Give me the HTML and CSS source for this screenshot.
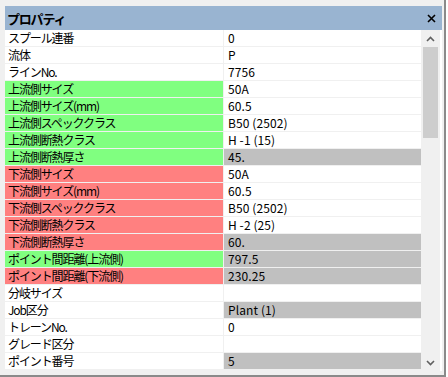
FILE: index.html
```html
<!DOCTYPE html>
<html lang="ja">
<head>
    <meta charset="UTF-8">
    <title>プロパティ</title>
    <link rel="stylesheet" href="styles.css">
</head>
<body>
    <div class="window">
        <div class="titlebar">
            <span class="title">プロパティ</span>
            <svg class="close" width="9" height="9" viewBox="0 0 9 9"><path d="M1 1 L8 8 M8 1 L1 8" stroke="#000" stroke-width="1.6"/></svg>
        </div>
        <div class="panel">
            <div class="grid">
                <div class="label">スプール連番</div><div class="value">0</div>
                <div class="label">流体</div><div class="value">P</div>
                <div class="label">ラインNo.</div><div class="value">7756</div>
                <div class="label up">上流側サイズ</div><div class="value">50A</div>
                <div class="label up">上流側サイズ(mm)</div><div class="value">60.5</div>
                <div class="label up">上流側スペッククラス</div><div class="value">B50 (2502)</div>
                <div class="label up">上流側断熱クラス</div><div class="value">H -1 (15)</div>
                <div class="label up">上流側断熱厚さ</div><div class="value ro">45.</div>
                <div class="label down">下流側サイズ</div><div class="value">50A</div>
                <div class="label down">下流側サイズ(mm)</div><div class="value">60.5</div>
                <div class="label down">下流側スペッククラス</div><div class="value">B50 (2502)</div>
                <div class="label down">下流側断熱クラス</div><div class="value">H -2 (25)</div>
                <div class="label down">下流側断熱厚さ</div><div class="value ro">60.</div>
                <div class="label up">ポイント間距離(上流側)</div><div class="value ro">797.5</div>
                <div class="label down">ポイント間距離(下流側)</div><div class="value ro">230.25</div>
                <div class="label">分岐サイズ</div><div class="value"></div>
                <div class="label">Job区分</div><div class="value ro">Plant (1)</div>
                <div class="label">トレーンNo.</div><div class="value">0</div>
                <div class="label">グレード区分</div><div class="value"></div>
                <div class="label">ポイント番号</div><div class="value ro">5</div>
            </div>
            <div class="scrollbar">
                <div class="arrow">
                    <svg width="9" height="6" viewBox="0 0 9 6"><path d="M1 5 L4.5 1.5 L8 5" fill="none" stroke="#606060" stroke-width="1.6"/></svg>
                </div>
                <div class="track"><div class="thumb"></div></div>
                <div class="arrow">
                    <svg width="9" height="6" viewBox="0 0 9 6"><path d="M1 1 L4.5 4.5 L8 1" fill="none" stroke="#606060" stroke-width="1.6"/></svg>
                </div>
            </div>
        </div>
    </div>
</body>
</html>
```

FILE: styles.css
```css
body {
    margin: 0;
    padding: 0;
    background-color: #ffffff;
    font-family: "Noto Sans CJK JP", "DejaVu Sans", sans-serif;
    font-size: 12px;
    color: #000000;
}
.window {
    width: 437px;
    height: 367px;
    padding: 6px 2px 2px 5px;
    background-color: #f0f0f0;
    border-right: 2px solid #8a8a8a;
    border-bottom: 2px solid #8a8a8a;
}
.titlebar {
    height: 24px;
    background-color: #99b4d1;
    display: flex;
    align-items: center;
    justify-content: space-between;
    padding: 0 6px 0 2px;
}
.title {
    font-weight: bold;
    font-size: 13px;
    letter-spacing: -1.2px;
}
.panel {
    display: flex;
    height: 341px;
    background-color: #ffffff;
}
.grid {
    width: 416px;
    display: grid;
    grid-template-columns: 218px 1fr;
    grid-auto-rows: 16px;
    column-gap: 1px;
    row-gap: 1px;
    background-color: #f0f0f0;
    align-content: start;
}
.label, .value {
    background-color: #ffffff;
    line-height: 16px;
    white-space: nowrap;
    overflow: hidden;
}
.label {
    padding-left: 3px;
    letter-spacing: -1.1px;
}
.value {
    padding-left: 4px;
    letter-spacing: 0.1px;
}
.label.up {
    background-color: #80ff80;
}
.label.down {
    background-color: #ff8080;
}
.value.ro {
    background-color: #c0c0c0;
}
.scrollbar {
    width: 19px;
    display: flex;
    flex-direction: column;
    background-color: #f0f0f0;
}
.arrow {
    height: 17px;
    display: flex;
    align-items: center;
    justify-content: center;
}
.track {
    flex: 1;
    padding: 0 2px;
}
.thumb {
    height: 91px;
    background-color: #cdcdcd;
}
```
